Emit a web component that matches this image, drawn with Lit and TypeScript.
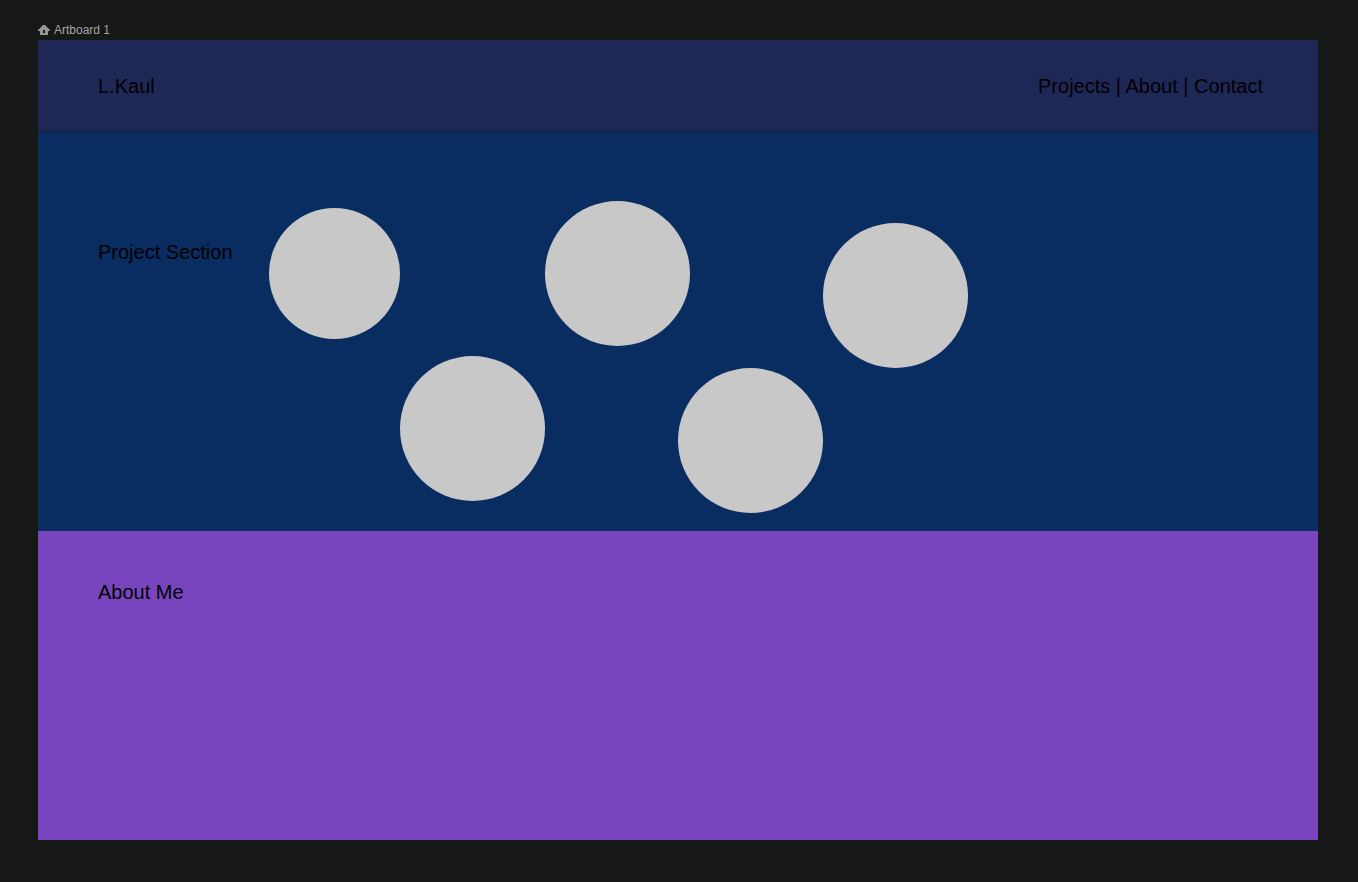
import { LitElement, html, css } from "lit";
import { customElement } from "lit/decorators.js";
import { styleMap } from "lit/directives/style-map.js";

interface Bubble {
  x: number;
  y: number;
  size: number;
}

// Project bubbles, placed freely on the section's canvas.
const BUBBLES: Bubble[] = [
  { x: 231, y: 76, size: 131 },
  { x: 507, y: 69, size: 145 },
  { x: 785, y: 91, size: 145 },
  { x: 362, y: 224, size: 145 },
  { x: 640, y: 236, size: 145 },
];

@customElement("app-root")
export class AppRoot extends LitElement {
  static styles = css`
    :host {
      display: flex;
      flex-direction: column;
      box-sizing: border-box;
      min-height: 100vh;
      padding: 20px 40px 42px 38px;
      background: #161817;
      color: #000;
      font-family: "Liberation Sans", Arial, sans-serif;
      font-size: 20px;
      line-height: 24px;
    }
    .label {
      display: flex;
      align-items: center;
      gap: 4px;
      height: 20px;
      color: #a4a4a4;
      font-size: 12px;
      line-height: 20px;
    }
    .home {
      display: block;
      width: 12px;
      height: 12px;
      fill: #969696;
    }
    .artboard {
      display: flex;
      flex-direction: column;
      flex: 1;
    }
    .header {
      display: flex;
      justify-content: space-between;
      padding: 34px 55px 34px 60px;
      background: #1f2756;
      box-shadow: inset 0 -2px 2px #1b244f;
    }
    .nav {
      white-space: pre;
    }
    .link {
      color: inherit;
      text-decoration: none;
    }
    .title {
      margin: 0;
      font-size: 20px;
      font-weight: 400;
      line-height: 24px;
    }
    .projects {
      position: relative;
      box-sizing: border-box;
      min-height: 399px;
      padding: 108px 60px 0;
      background: #092c61;
    }
    .bubble {
      position: absolute;
      border-radius: 50%;
      background: #c8c8c8;
    }
    .about {
      flex: 1;
      padding: 49px 60px;
      background: #7845bf;
    }
  `;

  render() {
    return html`
      <div class="label">
        <svg class="home" viewBox="0 0 12 12" aria-hidden="true">
          <path
            fill-rule="evenodd"
            d="M5 1H7L12 6V7H10V11H2V7H0V6ZM5 6V9H7V6Z"
          />
        </svg>
        <span>Artboard 1</span>
      </div>
      <div class="artboard">
        <header class="header">
          <span>L.Kaul</span>
          <nav class="nav"><a class="link" href="#projects">Projects</a> | <a class="link" href="#about">About</a> | <a class="link" href="#contact">Contact</a></nav>
        </header>
        <section class="projects" id="projects">
          <h2 class="title">Project Section</h2>
          ${BUBBLES.map(
            (b) => html`<div
              class="bubble"
              style=${styleMap({
                left: `${b.x}px`,
                top: `${b.y}px`,
                width: `${b.size}px`,
                height: `${b.size}px`,
              })}
            ></div>`
          )}
        </section>
        <section class="about" id="about">
          <h2 class="title">About Me</h2>
        </section>
      </div>
    `;
  }
}
